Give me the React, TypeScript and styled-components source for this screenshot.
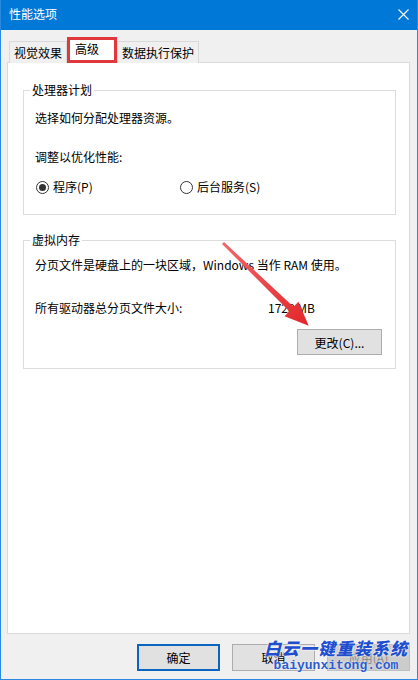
import styled, { createGlobalStyle } from "styled-components";

const GlobalStyle = createGlobalStyle`
  html, body {
    margin: 0;
    padding: 0;
    background: #fff;
  }
  body {
    font-family: "Noto Sans CJK SC", "Noto Sans", sans-serif;
    font-size: 12px;
    color: #000;
  }
  * {
    box-sizing: border-box;
  }
`;

const Window = styled.div`
  position: relative;
  width: 418px;
  height: 680px;
  display: flex;
  flex-direction: column;
  background: #f0f0f0;
  border: 1px solid #2b8ae0;
  border-top: none;
  overflow: hidden;
`;

const TitleBar = styled.div`
  height: 30px;
  margin: 0 -1px;
  padding: 0 9px 2px 9px;
  display: flex;
  align-items: center;
  justify-content: space-between;
  background: #0078d7;
  color: #fff;
  font-size: 12px;
  line-height: 16px;
`;

const Body = styled.div`
  flex: 1;
  display: flex;
  flex-direction: column;
  padding: 7px 7px 8px 6px;
`;

const TabRow = styled.div`
  position: relative;
  z-index: 1;
  display: flex;
  align-items: flex-end;
  padding-left: 2px;
  margin-bottom: -1px;
`;

const Tab = styled.div<{ $active?: boolean }>`
  display: flex;
  align-items: center;
  height: ${(p) => (p.$active ? "26px" : "22px")};
  padding: ${(p) => (p.$active ? "0 15px 2px 5px" : "0 4px")};
  border: ${(p) => (p.$active ? "3px solid #e0383c" : "1px solid #d9d9d9")};
  border-bottom: ${(p) => (p.$active ? "3px solid #e0383c" : "none")};
  background: ${(p) => (p.$active ? "#fff" : "#f0f0f0")};
  line-height: 16px;
  white-space: nowrap;
`;

const Panel = styled.div`
  flex: 1;
  background: #fff;
  border: 1px solid #d9d9d9;
  padding: 0 13px 0 15px;
`;

const Group = styled.fieldset<{ $mt: number }>`
  margin: ${(p) => p.$mt}px 0 0;
  padding: 0 13px 0 11px;
  border: 1px solid #dcdcdc;
  min-width: 0;
`;

const Legend = styled.legend`
  margin-left: -5px;
  padding: 0 2px;
  line-height: 16px;
`;

const Line = styled.div<{ $mt: number }>`
  margin-top: ${(p) => p.$mt}px;
  line-height: 16px;
  white-space: nowrap;
`;

const RadioRow = styled.div`
  display: grid;
  grid-template-columns: 144px auto;
  margin-top: 14px;
  margin-bottom: 19px;
  line-height: 16px;
`;

const Radio = styled.label`
  display: inline-flex;
  align-items: center;
  gap: 4px;
  padding-left: 1px;
`;

const Circle = styled.span<{ $checked?: boolean }>`
  width: 13px;
  height: 13px;
  border: 1px solid #333;
  border-radius: 50%;
  display: inline-flex;
  align-items: center;
  justify-content: center;

  &::after {
    content: "";
    width: 7px;
    height: 7px;
    border-radius: 50%;
    background: ${(p) => (p.$checked ? "#333" : "transparent")};
  }
`;

const ValueRow = styled.div`
  display: grid;
  grid-template-columns: 233px auto;
  margin-top: 27px;
  line-height: 16px;
`;

const ButtonRow = styled.div`
  display: flex;
  justify-content: flex-end;
  margin-top: 13px;
  margin-bottom: 13px;
`;

const WinButton = styled.button<{ $primary?: boolean; $disabled?: boolean }>`
  width: ${(p) => (p.$primary !== undefined ? "83px" : "85px")};
  height: 26px;
  padding: 0;
  font-family: inherit;
  font-size: 12px;
  color: ${(p) => (p.$disabled ? "#8a8a8a" : "#000")};
  background: ${(p) => (p.$disabled ? "#cccccc" : "#e1e1e1")};
  border: ${(p) =>
    p.$primary ? "2px solid #0a64c0" : p.$disabled ? "1px solid #bfbfbf" : "1px solid #adadad"};
`;

const Footer = styled.div`
  display: flex;
  justify-content: flex-end;
  gap: 12px;
  margin-top: 10px;

  & > button {
    height: 27px;
  }
`;

const Overlay = styled.svg`
  position: absolute;
  left: -1px;
  top: 0;
  pointer-events: none;
`;

const Watermark = styled.div`
  position: absolute;
  left: 263px;
  top: 638px;
  display: flex;
  flex-direction: column;
  align-items: center;
  pointer-events: none;
`;

const MarkTitle = styled.span`
  font-size: 17px;
  font-weight: 900;
  font-style: italic;
  letter-spacing: 1px;
  line-height: 20px;
  color: #1f4fcf;
  text-shadow: 0 0 2px #fff, 0 0 2px #fff;
`;

const MarkUrl = styled.span`
  font-family: "Liberation Mono", monospace;
  font-size: 13px;
  font-weight: bold;
  line-height: 16px;
  color: #2c5ccf;
  text-shadow: 0 0 2px #fff;
`;

function CloseIcon() {
  return (
    <svg width="11" height="11" viewBox="0 0 11 11">
      <path d="M0.5 0.5 L10.5 10.5 M10.5 0.5 L0.5 10.5" stroke="#fff" strokeWidth="1.1" />
    </svg>
  );
}

export default function App() {
  return (
    <>
      <GlobalStyle />
      <Window>
        <TitleBar>
          <span>性能选项</span>
          <CloseIcon />
        </TitleBar>
        <Body>
          <TabRow>
            <Tab>视觉效果</Tab>
            <Tab $active>高级</Tab>
            <Tab>数据执行保护</Tab>
          </TabRow>
          <Panel>
            <Group $mt={19}>
              <Legend>处理器计划</Legend>
              <Line $mt={12}>选择如何分配处理器资源。</Line>
              <Line $mt={23}>调整以优化性能:</Line>
              <RadioRow>
                <Radio>
                  <Circle $checked />
                  程序(P)
                </Radio>
                <Radio>
                  <Circle />
                  后台服务(S)
                </Radio>
              </RadioRow>
            </Group>
            <Group $mt={17}>
              <Legend>虚拟内存</Legend>
              <Line $mt={9}>分页文件是硬盘上的一块区域，Windows 当作 RAM 使用。</Line>
              <ValueRow>
                <span>所有驱动器总分页文件大小:</span>
                <span>1728 MB</span>
              </ValueRow>
              <ButtonRow>
                <WinButton>更改(C)...</WinButton>
              </ButtonRow>
            </Group>
          </Panel>
          <Footer>
            <WinButton $primary>确定</WinButton>
            <WinButton $primary={false}>取消</WinButton>
            <WinButton $primary={false} $disabled>
              应用(A)
            </WinButton>
          </Footer>
        </Body>
        <Overlay width="418" height="680" viewBox="0 0 418 680">
          <defs>
            <linearGradient id="arrowFill" x1="223" y1="243" x2="309" y2="326" gradientUnits="userSpaceOnUse">
              <stop offset="0" stopColor="#f2676a" />
              <stop offset="1" stopColor="#e3262a" />
            </linearGradient>
          </defs>
          <polygon
            points="222,244 224,242 293.5,306.8 298.4,301.8 308.7,325.7 284.5,316.2 289.3,311.2"
            fill="url(#arrowFill)"
          />
        </Overlay>
        <Watermark>
          <MarkTitle>白云一键重装系统</MarkTitle>
          <MarkUrl>baiyunxitong.com</MarkUrl>
        </Watermark>
      </Window>
    </>
  );
}
